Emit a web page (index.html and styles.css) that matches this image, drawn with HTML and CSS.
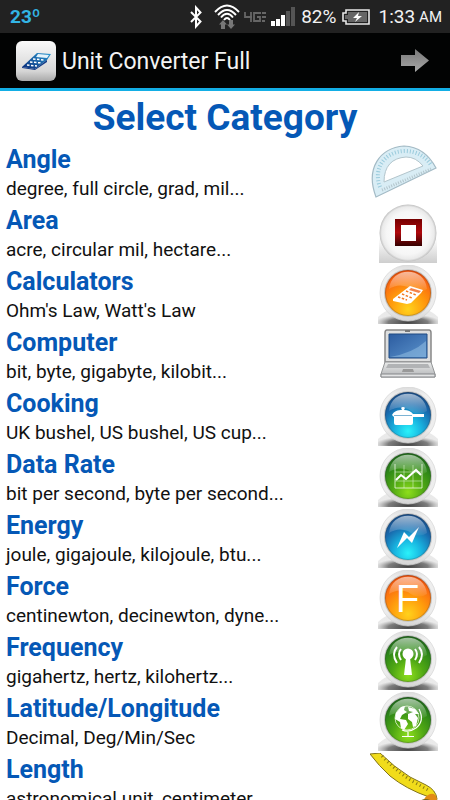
FILE: index.html
```html
<!DOCTYPE html>
<html lang="en">
<head>
<meta charset="utf-8">
<meta name="viewport" content="width=device-width, initial-scale=1">
<title>Unit Converter Full</title>
<link rel="stylesheet" href="styles.css">
</head>
<body>
<svg class="defs" width="0" height="0" aria-hidden="true">
  <defs>
    <linearGradient id="rim" x1="0" y1="0" x2="0" y2="1"><stop offset="0" stop-color="#dcdcdc"/><stop offset=".15" stop-color="#efefef"/><stop offset=".75" stop-color="#ededed"/><stop offset="1" stop-color="#d4d4d4"/></linearGradient>
    <radialGradient id="shade" cx=".5" cy=".9" r=".55"><stop offset="0" stop-color="#444"/><stop offset=".6" stop-color="#666" stop-opacity=".85"/><stop offset="1" stop-color="#aaa" stop-opacity=".25"/></radialGradient>
    <linearGradient id="plate" x1="0" y1="0" x2="0" y2="1"><stop offset="0" stop-color="#fff"/><stop offset="1" stop-color="#cecece"/></linearGradient>
    <linearGradient id="gloss" x1="0" y1="0" x2="0" y2="1"><stop offset="0" stop-color="#fff" stop-opacity=".6"/><stop offset="1" stop-color="#fff" stop-opacity=".05"/></linearGradient>
    <radialGradient id="orange" cx=".5" cy=".85" r=".85"><stop offset="0" stop-color="#ffd21c"/><stop offset=".45" stop-color="#ff9a0c"/><stop offset=".8" stop-color="#fa6a10"/><stop offset="1" stop-color="#e84b08"/></radialGradient>
    <radialGradient id="blue" cx=".5" cy=".85" r=".85"><stop offset="0" stop-color="#2af2fa"/><stop offset=".35" stop-color="#18b4e0"/><stop offset=".7" stop-color="#1868ac"/><stop offset="1" stop-color="#184a84"/></radialGradient>
    <radialGradient id="green" cx=".5" cy=".85" r=".85"><stop offset="0" stop-color="#8ede1c"/><stop offset=".4" stop-color="#50a814"/><stop offset=".75" stop-color="#2b8418"/><stop offset="1" stop-color="#1c6418"/></radialGradient>
    <radialGradient id="pearl"><stop offset="0" stop-color="#fff"/><stop offset=".75" stop-color="#f6f6f6"/><stop offset=".92" stop-color="#eaeaea"/><stop offset="1" stop-color="#c0c0c0"/></radialGradient>
    <linearGradient id="maroon" x1="0" y1="0" x2="0" y2="1"><stop offset="0" stop-color="#750000"/><stop offset=".5" stop-color="#ae080c"/><stop offset="1" stop-color="#350000"/></linearGradient>
    <linearGradient id="screen" x1="0" y1="0" x2="1" y2="1"><stop offset="0" stop-color="#2c5ca0"/><stop offset="1" stop-color="#5b93cc"/></linearGradient>
    <linearGradient id="metal" x1="0" y1="0" x2="0" y2="1"><stop offset="0" stop-color="#e9eaea"/><stop offset="1" stop-color="#b4b6b8"/></linearGradient>
    <linearGradient id="tile" x1="0" y1="0" x2="0" y2="1"><stop offset="0" stop-color="#fafafa"/><stop offset=".75" stop-color="#d6d6d6"/><stop offset="1" stop-color="#aaa"/></linearGradient>
    <linearGradient id="arrow" x1="0" y1="0" x2="0" y2="1"><stop offset="0" stop-color="#777"/><stop offset="1" stop-color="#a8a8a8"/></linearGradient>
    <linearGradient id="navy" x1="0" y1="1" x2="1" y2="0"><stop offset="0" stop-color="#062878"/><stop offset="1" stop-color="#2c9ad2"/></linearGradient>
    <g id="orb-base">
      <path d="M0 59V52Q6 46 14 44H46Q54 46 60 52V59Z" fill="url(#shade)"/>
      <circle cx="30" cy="28" r="28" fill="url(#rim)" stroke="#d4d4d4" stroke-width=".7"/>
      <circle cx="30" cy="28" r="24" fill="#c4c4c4"/>
    </g>
    <g id="orb-gloss">
      <circle cx="30" cy="28" r="22.500" fill="none" stroke="#333" stroke-opacity=".25"/>
      <path d="M11 24C13 1 47 1 49 24Q40 30 30 22Q20 18 11 24Z" fill="url(#gloss)"/>
    </g>
  </defs>
</svg>

<div class="screen">
  <div class="status">
    <span class="temp">23º</span>
    <svg class="bt" width="12" height="24" viewBox="0 0 12 24" fill="none" stroke="#fff" stroke-width="2" aria-hidden="true"><path d="M1 7L10.500 16.500L6 21.500V2.500L10.500 7.500L1 17"/></svg>
    <svg class="wifi" width="26" height="26" viewBox="0 0 26 26" fill="none" stroke="#fff" stroke-width="1.900" aria-hidden="true"><path d="M1 8Q13-5 25 8M4 11Q13 1 22 11M7 13.500Q13 6 19 13.500M10 16Q13 12 16 16"/><path d="M9 16L13 20.500H11V25H7V20.500H5ZM17 25L13 20.500H15V16H19V20.500H21Z" fill="#777" stroke="none"/></svg>
    <svg class="net" width="22" height="10" viewBox="0 0 22 10" fill="none" stroke="#666" stroke-width="1.800" aria-hidden="true"><path d="M1 0V5H8M7 0V10M17 1H10V9H16V5H13M18 1H22M18 5H22M18 9H21"/></svg>
    <svg class="signal" width="24" height="19" viewBox="0 0 24 19" aria-hidden="true"><path d="M0 14h4v5H0zM5 12h4v7H5zM10 8h4v11h-4z" fill="#fff"/><path d="M15 4h4v15h-4zM20 0h4v19h-4z" fill="#555"/></svg>
    <span class="percent">82%</span>
    <svg class="battery" width="28" height="16" viewBox="0 0 28 16" aria-hidden="true"><path d="M4 1H27V15H4V12H1V4H4Z" fill="none" stroke="#e8e8e8" stroke-width="1.600"/><path d="M6 3H25V13H6V10H3V6H6Z" fill="#666"/><path d="M17 3L11 9H15L13 13L20 7H16Z" fill="#fff"/></svg>
    <span class="time">1:33</span><span class="ampm">AM</span>
  </div>

  <header class="bar">
    <svg width="40" height="40" viewBox="0 0 40 40" aria-hidden="true"><rect width="40" height="40" rx="6" fill="url(#tile)"/><path d="M6 26L21 12L35 13L31 19L19 28Z" fill="url(#navy)"/><path d="M22 13L33 14L31 17L20 16Z" fill="#e4f3fb"/><path d="M17 18l11 1M14 21l12 1M11 24l10 1" stroke="#fff" stroke-width="1.500" stroke-dasharray="2.500 1.500"/><path d="M6 26L19 28L31 19V21L19 29L6 27Z" fill="#123a86"/></svg>
    <span class="app">Unit Converter Full</span>
    <button class="next" type="button" aria-label="Next"><svg width="30" height="25" viewBox="0 0 30 25" aria-hidden="true"><path d="M1 7H15V1L29 12.500L15 24V18H1Z" fill="url(#arrow)"/></svg></button>
  </header>

  <main class="content">
    <h1>Select Category</h1>
    <ul class="list">
      <li><a href="#angle"><span class="text"><strong>Angle</strong><span>degree, full circle, grad, mil...</span></span>
        <svg class="wide" width="68" height="60" viewBox="0 0 68 60" aria-hidden="true"><path d="M6 54C-5 25 10 5 34 3Q55 4 66 25Z" fill="#d9edf5" stroke="#a3bac5" stroke-width="1.200"/><path d="M10 44C3 26 14 9 34 8Q52 8 61 22" fill="none" stroke="#9acbdc" stroke-width="4" stroke-dasharray="1 2"/><path d="M14 39C14 23 22 15 36 14Q46 14 53 23Z" fill="#fff" stroke="#b3c5cc"/><path d="M12 47L61 26" stroke="#b3c5cc" stroke-width="3" stroke-dasharray="1 1.500"/></svg></a></li>
      <li><a href="#area"><span class="text"><strong>Area</strong><span>acre, circular mil, hectare...</span></span>
        <svg width="60" height="60" viewBox="0 0 60 60" aria-hidden="true"><path d="M1 34H59V59H1Z" fill="url(#plate)"/><circle cx="30" cy="29" r="28.500" fill="url(#pearl)"/><path d="M17 15H44V42H17ZM23 21V37H38V21Z" fill="url(#maroon)" fill-rule="evenodd"/><path d="M23 21H38V37H23Z" fill="#fff"/></svg></a></li>
      <li><a href="#calculators"><span class="text"><strong>Calculators</strong><span>Ohm's Law, Watt's Law</span></span>
        <svg width="60" height="60" viewBox="0 0 60 60" aria-hidden="true"><use href="#orb-base"/><circle cx="30" cy="28" r="23" fill="url(#orange)"/><use href="#orb-gloss"/><path d="M15 34L32 21L45 25L43 28L33 38L29 39L15 36Z" fill="#fff"/><path d="M33 23L43 26L41 28L31 25Z" fill="#f4824a"/><path d="M28 26l10 4M24 29l10 4M20 32l9 3" stroke="#f37a22" stroke-width="1.500" stroke-dasharray="2.500 1.500"/></svg></a></li>
      <li><a href="#computer"><span class="text"><strong>Computer</strong><span>bit, byte, gigabyte, kilobit...</span></span>
        <svg width="60" height="60" viewBox="0 0 60 60" aria-hidden="true"><path d="M9 4H51Q53 4 53 7V36H7V7Q7 4 9 4Z" fill="#dedfdf" stroke="#888" stroke-width="1.500"/><path d="M11 8H49V32H11Z" fill="url(#screen)" stroke="#204b82"/><path d="M12 31Q35 27 48 15V31Z" fill="#91bde2" opacity=".55"/><path d="M27 4H32V6H27Z" fill="#777"/><path d="M7 36H53L57 48V51H3V48Z" fill="url(#metal)" stroke="#949698"/><path d="M10 38H50L52 42H8Z" fill="#b1b3b5"/><path d="M25 43H35L36 46H24Z" fill="#999"/><path d="M3 48H57V51H3Z" fill="#e3e4e5" stroke="#85878a"/></svg></a></li>
      <li><a href="#cooking"><span class="text"><strong>Cooking</strong><span>UK bushel, US bushel, US cup...</span></span>
        <svg width="60" height="60" viewBox="0 0 60 60" aria-hidden="true"><use href="#orb-base"/><circle cx="30" cy="28" r="23" fill="url(#blue)"/><use href="#orb-gloss"/><path d="M14 28C16 24 20 23 24 23Q22 20 25 20Q28 20 26 23Q32 23 35 27H46V30H35V36Q35 38 33 38H18Q16 38 16 36V30L14 28Z" fill="#fff"/><path d="M16 28.500H34" stroke="#7cb4d4"/></svg></a></li>
      <li><a href="#data-rate"><span class="text"><strong>Data Rate</strong><span>bit per second, byte per second...</span></span>
        <svg width="60" height="60" viewBox="0 0 60 60" aria-hidden="true"><use href="#orb-base"/><circle cx="30" cy="28" r="23" fill="url(#green)"/><use href="#orb-gloss"/><path d="M26 17V40M35 17V40M17 24H44M17 33H44" stroke="#d2eec2" stroke-opacity=".6"/><path d="M17 16V40H44V16" fill="none" stroke="#edf8e5" stroke-opacity=".8"/><path d="M18 32L23 27L28 31L38 22L43 27" fill="none" stroke="#fff" stroke-width="2"/></svg></a></li>
      <li><a href="#energy"><span class="text"><strong>Energy</strong><span>joule, gigajoule, kilojoule, btu...</span></span>
        <svg width="60" height="60" viewBox="0 0 60 60" aria-hidden="true"><use href="#orb-base"/><circle cx="30" cy="28" r="23" fill="url(#blue)"/><use href="#orb-gloss"/><path d="M41 18L34 34L29 29L19 39L26 23L31 28Z" fill="#fff"/></svg></a></li>
      <li><a href="#force"><span class="text"><strong>Force</strong><span>centinewton, decinewton, dyne...</span></span>
        <svg width="60" height="60" viewBox="0 0 60 60" aria-hidden="true"><use href="#orb-base"/><circle cx="30" cy="28" r="23" fill="url(#orange)"/><use href="#orb-gloss"/><text class="letter" x="18" y="42">F</text></svg></a></li>
      <li><a href="#frequency"><span class="text"><strong>Frequency</strong><span>gigahertz, hertz, kilohertz...</span></span>
        <svg width="60" height="60" viewBox="0 0 60 60" aria-hidden="true"><use href="#orb-base"/><circle cx="30" cy="28" r="23" fill="url(#green)"/><use href="#orb-gloss"/><circle cx="30" cy="23" r="5.500" fill="#fff"/><path d="M28 27H32L34 44H26Z" fill="#fff"/><path d="M23 18Q19 23 23 29M19 16Q13 23 19 32M37 18Q41 23 37 29M41 16Q47 23 41 32" fill="none" stroke="#fff" stroke-width="2"/></svg></a></li>
      <li><a href="#latitude-longitude"><span class="text"><strong>Latitude/Longitude</strong><span>Decimal, Deg/Min/Sec</span></span>
        <svg width="60" height="60" viewBox="0 0 60 60" aria-hidden="true"><use href="#orb-base"/><circle cx="30" cy="28" r="23" fill="url(#green)"/><use href="#orb-gloss"/><circle cx="29" cy="26" r="12" fill="none" stroke="#eaf6dd" stroke-width=".8"/><path d="M18 21L23 15L27 14L26 18L29 20L24 23L22 27L28 28L30 32L26 38L23 36L22 30L17 27ZM30 15L37 17L41 22L37 22L40 26L38 34L35 35L34 30L30 27L30 22L35 20L31 19Z" fill="#fff"/><path d="M41 17Q47 29 38 36Q31 41 24 38M30 40V44M24 44.500H36" fill="none" stroke="#fff" stroke-width="1.200"/></svg></a></li>
      <li><a href="#length"><span class="text"><strong>Length</strong><span>astronomical unit, centimeter...</span></span>
        <svg class="wide" width="68" height="60" viewBox="0 0 68 60" aria-hidden="true"><path d="M0 1L10 0Q24 14 40 24L56 32Q66 37 67 46L60 60H52Q52 49 59 44Q36 36 20 23Q9 13 0 1Z" fill="#f1dc1b" stroke="#81721b"/><path d="M12 3Q26 18 42 28L60 38" fill="none" stroke="#887b13" stroke-width="3" stroke-dasharray="1 3"/><path d="M58 42Q65 38 67 46L62 60H52Q51 46 58 42Z" fill="#e18a16"/><path d="M50 48Q55 44 62 48L57 60H51Z" fill="#6e6321"/></svg></a></li>
    </ul>
  </main>
</div>
</body>
</html>
```

FILE: styles.css
```css
* { box-sizing: border-box; }

body {
  margin: 0;
  background: #fff;
  color: #111;
  font-family: Roboto, "Liberation Sans", sans-serif;
}

.defs { position: absolute; }

.screen {
  display: flex;
  flex-direction: column;
  height: 100vh;
  overflow: hidden;
}

.status {
  display: flex;
  flex: none;
  align-items: center;
  height: 33px;
  padding: 0 8px 0 10px;
  background: #222;
  color: #f2f2f2;
  font-size: 19px;
  line-height: 32px;
}

.temp {
  margin-right: auto;
  color: #33b5e5;
  font-weight: 700;
}

.bt { margin-right: 12px; }
.wifi { margin-right: 4px; }
.net { margin-right: 5px; }
.signal { margin-right: 6px; }
.percent { margin-right: 6px; }
.battery { margin-right: 8px; }
.time { margin-right: 4px; }
.ampm { font-size: 15px; line-height: 36px; }

.bar {
  display: flex;
  flex: none;
  align-items: center;
  gap: 6px;
  height: 58px;
  padding: 0 20px 0 16px;
  border-bottom: 3px solid #13aee5;
  background: #020303;
  color: #f3f3f3;
}

.app {
  padding-top: 2px;
  font-size: 23px;
  line-height: 28px;
}

.next {
  display: flex;
  margin-left: auto;
  padding: 0;
  border: 0;
  background: none;
}

.content {
  flex: 1;
  min-height: 0;
  overflow-y: auto;
  scrollbar-width: none;
}

h1 {
  margin: 0;
  padding-top: 2px;
  color: #0558b6;
  font-size: 37px;
  font-weight: 700;
  line-height: 50px;
  text-align: center;
}

.list {
  margin: 0;
  padding: 0;
  list-style: none;
}

.list a {
  display: flex;
  align-items: flex-start;
  justify-content: space-between;
  height: 61px;
  padding: 0 12px 0 6px;
  color: inherit;
  text-decoration: none;
}

.list svg { flex: none; }

.text {
  display: flex;
  flex-direction: column;
  font-size: 19px;
  line-height: 24px;
  white-space: nowrap;
}

.text strong {
  color: #0558b6;
  font-size: 25px;
  line-height: 34px;
}

.letter {
  fill: #fff;
  font-family: "Liberation Sans", sans-serif;
  font-size: 38px;
}
```
